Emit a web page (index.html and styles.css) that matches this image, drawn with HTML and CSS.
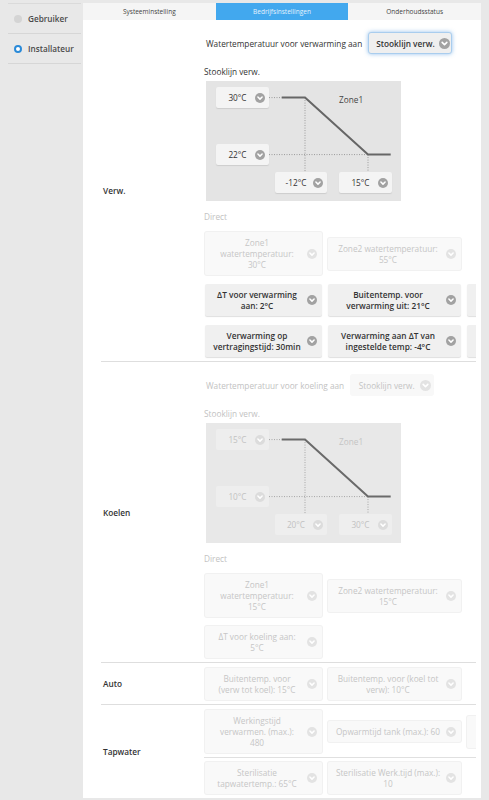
FILE: index.html
```html
<!DOCTYPE html>
<html lang="nl">
<head>
<meta charset="utf-8">
<title>Bedrijfsinstellingen</title>
<link rel="stylesheet" href="styles.css">
</head>
<body>
<svg class="defs" aria-hidden="true">
  <symbol id="chev" viewBox="0 0 10 10">
    <circle cx="5" cy="5" r="5" fill="currentColor"/>
    <path d="M2.9 4 L5 6.1 L7.1 4" fill="none" stroke="#fff" stroke-width="1.5" stroke-linecap="round" stroke-linejoin="round"/>
  </symbol>
</svg>
<div class="app">
  <aside class="sidebar">
    <div class="side-item"><span class="radio"></span>Gebruiker</div>
    <div class="side-item"><span class="radio on"></span>Installateur</div>
  </aside>
  <main class="main">
    <nav class="tabs">
      <div class="tab">Systeeminstelling</div>
      <div class="tab active">Bedrijfsinstellingen</div>
      <div class="tab">Onderhoudsstatus</div>
    </nav>
    <div class="panel">
      <div class="table">
        <section class="row">
          <div class="label">Verw.</div>
          <div class="content">
            <div class="sel-row">
              <span>Watertemperatuur voor verwarming aan</span>
              <div class="select focus"><span class="txt">Stooklijn verw.</span><svg class="chev big"><use href="#chev"/></svg></div>
            </div>
            <div class="sub">Stooklijn verw.</div>
            <div class="graph">
              <svg class="lines" viewBox="0 0 195 120">
                <path d="M63 16.6 H75.7 M99 16.6 V91 M63 73.6 H162 M162 73.6 V91" fill="none" stroke="#9a9a9a" stroke-width="1" stroke-dasharray="1 1.5"/>
                <path d="M75.7 16.6 H99 L162 73.6 H184.7" fill="none" stroke="#666" stroke-width="2"/>
              </svg>
              <div class="zone">Zone1</div>
              <div class="gdd p1"><span class="txt">30°C</span><svg class="chev"><use href="#chev"/></svg></div>
              <div class="gdd p2"><span class="txt">22°C</span><svg class="chev"><use href="#chev"/></svg></div>
              <div class="gdd p3"><span class="txt">-12°C</span><svg class="chev"><use href="#chev"/></svg></div>
              <div class="gdd p4"><span class="txt">15°C</span><svg class="chev"><use href="#chev"/></svg></div>
            </div>
            <div class="direct">Direct</div>
            <div class="cards">
              <div class="card-row">
                <div class="card w1 off"><span class="txt">Zone1<br>watertemperatuur:<br>30°C</span><svg class="chev"><use href="#chev"/></svg></div>
                <div class="card w2 off"><span class="txt">Zone2 watertemperatuur:<br>55°C</span><svg class="chev"><use href="#chev"/></svg></div>
              </div>
              <div class="card-row">
                <div class="card w1"><span class="txt">ΔT voor verwarming<br>aan: 2°C</span><svg class="chev"><use href="#chev"/></svg></div>
                <div class="card w2"><span class="txt">Buitentemp. voor<br>verwarming uit: 21°C</span><svg class="chev"><use href="#chev"/></svg></div>
                <div class="card w3 stub"></div>
              </div>
              <div class="card-row">
                <div class="card w1"><span class="txt">Verwarming op<br>vertragingstijd: 30min</span><svg class="chev"><use href="#chev"/></svg></div>
                <div class="card w2"><span class="txt">Verwarming aan ΔT van<br>ingestelde temp: -4°C</span><svg class="chev"><use href="#chev"/></svg></div>
                <div class="card w3 stub"></div>
              </div>
            </div>
          </div>
        </section>

        <section class="row">
          <div class="label">Koelen</div>
          <div class="content">
            <div class="sel-row off-text">
              <span>Watertemperatuur voor koeling aan</span>
              <div class="select off"><span class="txt">Stooklijn verw.</span><svg class="chev big"><use href="#chev"/></svg></div>
            </div>
            <div class="sub off-text">Stooklijn verw.</div>
            <div class="graph dis">
              <svg class="lines" viewBox="0 0 195 120">
                <path d="M63 16.6 H75.7 M99 16.6 V91 M63 73.6 H162 M162 73.6 V91" fill="none" stroke="#a5a5a5" stroke-width="1" stroke-dasharray="1 1.5"/>
                <path d="M75.7 16.6 H99 L162 73.6 H184.7" fill="none" stroke="#6a6a6a" stroke-width="2"/>
              </svg>
              <div class="zone">Zone1</div>
              <div class="gdd p1"><span class="txt">15°C</span><svg class="chev"><use href="#chev"/></svg></div>
              <div class="gdd p2"><span class="txt">10°C</span><svg class="chev"><use href="#chev"/></svg></div>
              <div class="gdd p3"><span class="txt">20°C</span><svg class="chev"><use href="#chev"/></svg></div>
              <div class="gdd p4"><span class="txt">30°C</span><svg class="chev"><use href="#chev"/></svg></div>
            </div>
            <div class="direct">Direct</div>
            <div class="cards">
              <div class="card-row">
                <div class="card w1 off"><span class="txt">Zone1<br>watertemperatuur:<br>15°C</span><svg class="chev"><use href="#chev"/></svg></div>
                <div class="card w2 off"><span class="txt">Zone2 watertemperatuur:<br>15°C</span><svg class="chev"><use href="#chev"/></svg></div>
              </div>
              <div class="card-row">
                <div class="card w1 off"><span class="txt">ΔT voor koeling aan:<br>5°C</span><svg class="chev"><use href="#chev"/></svg></div>
              </div>
            </div>
          </div>
        </section>

        <section class="row">
          <div class="label">Auto</div>
          <div class="content tight">
            <div class="card-row">
              <div class="card w1 off"><span class="txt">Buitentemp. voor<br>(verw tot koel): 15°C</span><svg class="chev"><use href="#chev"/></svg></div>
              <div class="card w2 off"><span class="txt">Buitentemp. voor (koel tot<br>verw): 10°C</span><svg class="chev"><use href="#chev"/></svg></div>
            </div>
          </div>
        </section>

        <section class="row">
          <div class="label">Tapwater</div>
          <div class="content tight">
            <div class="card-row">
              <div class="card w1 off"><span class="txt">Werkingstijd<br>verwarmen. (max.):<br>480</span><svg class="chev"><use href="#chev"/></svg></div>
              <div class="card w2 off"><span class="txt">Opwarmtijd tank (max.): 60</span><svg class="chev"><use href="#chev"/></svg></div>
              <div class="card w3 off stub"></div>
            </div>
            <div class="divider"></div>
            <div class="card-row">
              <div class="card w1 off"><span class="txt">Sterilisatie<br>tapwatertemp.: 65°C</span><svg class="chev"><use href="#chev"/></svg></div>
              <div class="card w2 off"><span class="txt">Sterilisatie Werk.tijd (max.):<br>10</span><svg class="chev"><use href="#chev"/></svg></div>
            </div>
          </div>
        </section>
      </div>
    </div>
  </main>
</div>
</body>
</html>
```

FILE: styles.css
```css
* { box-sizing: border-box; }

body {
  margin: 0;
  background: #e8e8e8;
  font-family: "Open Sans", "Liberation Sans", sans-serif;
  font-size: 8.25px;
  color: #333;
}

.defs { position: absolute; width: 0; height: 0; overflow: hidden; }

.app {
  display: flex;
  gap: 2px;
  padding: 3px 0 0 8px;
}

/* sidebar */
.sidebar {
  width: 73px;
  flex: none;
  align-self: flex-start;
  border-top: 1px solid #dadada;
}
.side-item {
  height: 30px;
  display: flex;
  align-items: center;
  gap: 6px;
  padding-left: 6px;
  border-bottom: 1px solid #d6d6d6;
  font-size: 8.2px;
  font-weight: 600;
  color: #4a4a4a;
}
.radio {
  width: 8px;
  height: 8px;
  border-radius: 50%;
  background: #d4d4d4;
  flex: none;
}
.radio.on {
  background: #fff;
  border: 2.5px solid #2a8ad8;
}

/* main */
.main { width: 398px; flex: none; }

.tabs {
  display: flex;
  height: 17px;
  background: #f5f5f5;
}
.tab {
  flex: 1;
  display: flex;
  align-items: center;
  justify-content: center;
  font-size: 6.5px;
  color: #444;
}
.tab.active {
  background: #42a8ee;
  color: #e6f3fd;
}

.panel {
  background: #fff;
  padding: 0 5px 0 18px;
}
.table { overflow: hidden; }

.row {
  display: flex;
  border-bottom: 1px solid #dedede;
}
.row:last-child { border-bottom: 0; }

.label {
  width: 103px;
  flex: none;
  display: flex;
  align-items: center;
  padding-left: 2px;
  font-weight: 600;
  color: #333;
}

.content {
  flex: 1;
  min-width: 0;
  padding: 12px 0 4px;
}
.content.tight { padding: 5px 0 4px; }

/* selector line */
.sel-row {
  display: flex;
  align-items: center;
  gap: 6px;
  height: 22px;
  padding-left: 2px;
  color: #333;
}
.select {
  width: 84px;
  height: 22px;
  flex: none;
  display: flex;
  align-items: center;
  padding: 0 3px 0 7px;
  background: #efefef;
  border-radius: 3px;
  font-weight: 600;
  color: #333;
}
.select.focus {
  border: 1px solid #a9cdee;
  box-shadow: 0 0 4px rgba(60, 140, 220, 0.55);
}
.select.off {
  background: #f8f8f8;
  color: #c4c4c4;
  font-weight: 400;
}
.select .txt { flex: 1; text-align: center; white-space: nowrap; }

.off-text { color: #c2c2c2; }

.sub {
  margin-top: 12px;
  line-height: 11px;
}

/* chevron icon */
.chev {
  width: 10px;
  height: 10px;
  flex: none;
  margin-left: 4px;
  color: #a2a2a2;
}
.chev.big { width: 11px; height: 11px; }
.off .chev { color: #e3e3e3; }

/* curve graph */
.graph {
  position: relative;
  width: 195px;
  height: 120px;
  margin: 4px 0 0 2px;
  background: #e4e4e4;
}
.graph .lines {
  position: absolute;
  left: 0;
  top: 0;
  width: 195px;
  height: 120px;
}
.zone {
  position: absolute;
  left: 133px;
  top: 13px;
  line-height: 11px;
  color: #444;
}
.gdd {
  position: absolute;
  width: 53px;
  height: 21px;
  display: flex;
  align-items: center;
  padding: 0 4px 0 8px;
  background: #f4f4f4;
  border-radius: 2px;
  box-shadow: 0 1px 1px rgba(0, 0, 0, 0.1);
  color: #333;
}
.gdd .txt { flex: 1; text-align: center; }
.p1 { left: 10px; top: 6px; }
.p2 { left: 10px; top: 63px; }
.p3 { left: 69px; top: 91px; width: 52px; }
.p4 { left: 133px; top: 91px; }

.graph.dis { background: #e8e8e8; }
.graph.dis .zone { color: #c4c4c4; }
.graph.dis .gdd {
  background: #eeeeee;
  box-shadow: none;
  color: #c2c2c2;
}
.graph.dis .chev { color: #dcdcdc; }

.direct {
  margin-top: 10px;
  line-height: 11px;
  color: #c2c2c2;
}

/* option cards */
.cards {
  margin-top: 10px;
  display: flex;
  flex-direction: column;
  gap: 9px;
}
.card-row {
  display: flex;
  align-items: center;
  gap: 6px;
  padding-left: 1px;
}
.card {
  flex: none;
  display: flex;
  align-items: center;
  padding: 5px 5px 5px 6px;
  background: #f0f0f0;
  border-radius: 2px;
  box-shadow: 0 1px 1px rgba(0, 0, 0, 0.13);
  line-height: 11px;
  font-weight: 600;
  color: #333;
}
.card .txt { flex: 1; text-align: center; white-space: nowrap; }
.card.stub { height: 32px; }
.w1 { width: 117px; }
.w2 { width: 133px; }
.w3 { width: 133px; }
.card.off {
  background: #f9f9f9;
  box-shadow: 0 0 0 1px #f1f1f1;
  color: #c6c6c6;
  font-weight: 400;
}

.divider {
  height: 1px;
  background: #e0e0e0;
  margin: 4px 0;
}
```
